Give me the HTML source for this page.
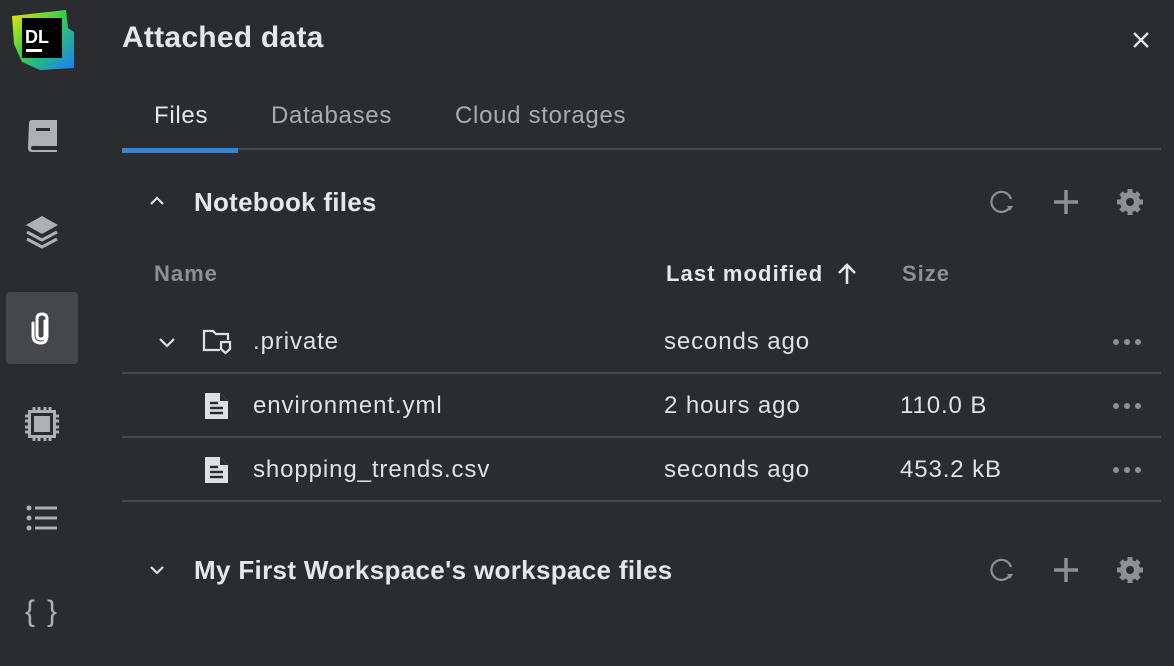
<!DOCTYPE html><html><head><style>
body{margin:0;width:1174px;height:666px;background:#2b2c2f;font-family:"Liberation Sans",sans-serif;color:#dfe1e5;position:relative;overflow:hidden}
.a{position:absolute}
.t{white-space:nowrap}
.r{font-size:24px;letter-spacing:0.9px}
.sep{position:absolute;left:122px;width:1039px;height:2px;background:#45474b}
</style></head><body>
<svg class="a" style="left:10px;top:10px" width="66" height="66" viewBox="0 0 66 66">
<defs><linearGradient id="g" x1="0" y1="0" x2="1" y2="1"><stop offset="0" stop-color="#f5e600"/><stop offset=".45" stop-color="#2fd34a"/><stop offset="1" stop-color="#1a7cff"/></linearGradient></defs>
<path d="M2 6 L56 0 L58 18 L64 22 L64 58 L30 60 L12 52 L4 34 Z" fill="url(#g)"/>
<rect x="12" y="8" width="40" height="40" fill="#000"/>
<text x="15" y="33" font-family="Liberation Sans" font-weight="bold" font-size="18" fill="#fff">DL</text>
<rect x="16" y="39" width="16" height="3" fill="#fff"/>
</svg>
<svg class="a" style="left:26px;top:119px" width="32" height="34" viewBox="0 0 32 34"><path d="M3 4 Q3 1 6 1 H31 V27 H7 Q5 27 5 29 Q5 31 7 31 H31 V33 H6 Q2 33 2 29 Z" fill="#aeb0b4"/><rect x="10" y="9" width="14" height="3" fill="#2b2c2f"/></svg>
<svg class="a" style="left:24px;top:214px" width="36" height="36" viewBox="0 0 36 36"><path d="M18 2 L34 11 L18 20 L2 11Z" fill="#aeb0b4"/><path d="M3 18 L18 26 L33 18" stroke="#aeb0b4" stroke-width="3" fill="none"/><path d="M3 25 L18 33 L33 25" stroke="#aeb0b4" stroke-width="3" fill="none"/></svg>
<div class="a" style="left:6px;top:292px;width:72px;height:72px;background:#46474b;border-radius:4px"></div>
<svg class="a" style="left:28px;top:311px" width="28" height="34" viewBox="0 0 28 34"><path d="M17 10 V24 Q17 28 13 28 Q9 28 9 24 V8 Q9 3 14 3 Q19 3 19 8 V24 Q19 32 13 32 Q5 32 5 24 V12" stroke="#fff" stroke-width="3" fill="none" stroke-linecap="round"/></svg>
<svg class="a" style="left:24px;top:406px" width="36" height="36" viewBox="0 0 36 36"><g stroke="#aeb0b4" stroke-width="3"><path d="M10 1v5M15 1v5M21 1v5M26 1v5M10 30v5M15 30v5M21 30v5M26 30v5M1 10h5M1 15h5M1 21h5M1 26h5M30 10h5M30 15h5M30 21h5M30 26h5"/><rect x="5.5" y="5.5" width="25" height="25" fill="none"/></g><rect x="10" y="10" width="16" height="16" fill="#aeb0b4"/></svg>
<svg class="a" style="left:25px;top:503px" width="34" height="34" viewBox="0 0 34 34"><g fill="#aeb0b4"><circle cx="4" cy="5" r="2.5"/><circle cx="4" cy="15" r="2.5"/><circle cx="4" cy="25" r="2.5"/><rect x="10" y="3.5" width="22" height="3"/><rect x="10" y="13.5" width="22" height="3"/><rect x="10" y="23.5" width="22" height="3"/></g></svg>
<div class="a t" style="left:25px;top:595px;font-size:30px;color:#aeb0b4;letter-spacing:12px">{}</div>

<div class="a t" style="left:122px;top:21px;font-size:30px;font-weight:bold;color:#e6e7ea;letter-spacing:0.25px">Attached data</div>
<svg class="a" style="left:1132px;top:31px" width="18" height="18"><path d="M2 2L16 16M16 2L2 16" stroke="#dfe1e5" stroke-width="2.4"/></svg>

<div class="a t" style="left:154px;top:102px;font-size:24px;color:#e6e7ea;letter-spacing:0.7px">Files</div>
<div class="a t" style="left:271px;top:102px;font-size:24px;color:#a9abaf;letter-spacing:0.7px">Databases</div>
<div class="a t" style="left:455px;top:102px;font-size:24px;color:#a9abaf;letter-spacing:0.7px">Cloud storages</div>
<div class="a" style="left:122px;top:148px;width:1039px;height:2px;background:#45474b"></div>
<div class="a" style="left:122px;top:148px;width:116px;height:5px;background:#3d83c6"></div>

<svg class="a" style="left:149px;top:195px" width="16" height="12"><path d="M2 9L8 3L14 9" stroke="#dfe1e5" stroke-width="2.2" fill="none"/></svg>
<div class="a t" style="left:194px;top:187px;font-size:26px;font-weight:bold;color:#e6e7ea;letter-spacing:0.25px">Notebook files</div>

<svg class="a" style="left:988px;top:189px" width="28" height="28" viewBox="0 0 28 28"><path d="M22 18 A10 10 0 1 1 23 10" stroke="#8e9094" stroke-width="2.2" fill="none"/><path d="M25 17 L19 17 L22 22Z" fill="#8e9094"/></svg>
<svg class="a" style="left:1053px;top:189px" width="26" height="26"><path d="M13 1V25M1 13H25" stroke="#8e9094" stroke-width="3.5"/></svg>
<svg class="a" style="left:1116px;top:188px" width="28" height="28" viewBox="0 0 28 28"><g fill="#8e9094"><circle cx="14" cy="14" r="10"/><g stroke="#8e9094" stroke-width="5"><path d="M14 1V27M1 14H27M5 5L23 23M23 5L5 23"/></g></g><circle cx="14" cy="14" r="4" fill="#2b2c2f"/></svg>

<div class="a t" style="left:154px;top:261px;font-size:22px;color:#8e9094;font-weight:bold;letter-spacing:1px">Name</div>
<div class="a t" style="left:666px;top:261px;font-size:22px;color:#e6e7ea;font-weight:bold;letter-spacing:1.1px">Last modified</div>
<svg class="a" style="left:837px;top:262px" width="20" height="24"><path d="M10 22V3M2 11L10 3L18 11" stroke="#e6e7ea" stroke-width="2.6" fill="none"/></svg>
<div class="a t" style="left:902px;top:261px;font-size:22px;color:#8e9094;font-weight:bold;letter-spacing:1px">Size</div>

<svg class="a" style="left:158px;top:336px" width="18" height="12"><path d="M2 3L9 10L16 3" stroke="#dfe1e5" stroke-width="2.2" fill="none"/></svg>
<svg class="a" style="left:202px;top:328px" width="30" height="28" viewBox="0 0 30 28"><path d="M18 22H2V3H11L14 6H26V12" stroke="#dfe1e5" stroke-width="2.2" fill="none"/><path d="M19 14H28V21L23.5 25L19 21Z" stroke="#dfe1e5" stroke-width="2.2" fill="none"/></svg>
<div class="a t r" style="left:253px;top:328px">.private</div>
<div class="a t r" style="left:664px;top:328px">seconds ago</div>
<div class="sep" style="top:372px"></div>

<svg class="a" style="left:204px;top:392px" width="26" height="28" viewBox="0 0 26 28"><path d="M1 1H16L24 9V27H1Z" fill="#dfe1e5"/><path d="M16 1V9H24" fill="#2b2c2f"/><path d="M6 11H14M6 16H19M6 21H19" stroke="#2b2c2f" stroke-width="2.4"/></svg>
<div class="a t r" style="left:253px;top:392px">environment.yml</div>
<div class="a t r" style="left:664px;top:392px">2 hours ago</div>
<div class="a t r" style="left:900px;top:392px">110.0 B</div>
<div class="sep" style="top:436px"></div>

<svg class="a" style="left:204px;top:456px" width="26" height="28" viewBox="0 0 26 28"><path d="M1 1H16L24 9V27H1Z" fill="#dfe1e5"/><path d="M16 1V9H24" fill="#2b2c2f"/><path d="M6 11H14M6 16H19M6 21H19" stroke="#2b2c2f" stroke-width="2.4"/></svg>
<div class="a t r" style="left:253px;top:456px">shopping_trends.csv</div>
<div class="a t r" style="left:664px;top:456px">seconds ago</div>
<div class="a t r" style="left:900px;top:456px">453.2 kB</div>
<div class="sep" style="top:500px"></div>

<svg class="a" style="left:1112px;top:336px" width="32" height="142"><g fill="#8e9094"><circle cx="4" cy="6" r="3"/><circle cx="15" cy="6" r="3"/><circle cx="26" cy="6" r="3"/><circle cx="4" cy="70" r="3"/><circle cx="15" cy="70" r="3"/><circle cx="26" cy="70" r="3"/><circle cx="4" cy="134" r="3"/><circle cx="15" cy="134" r="3"/><circle cx="26" cy="134" r="3"/></g></svg>

<svg class="a" style="left:149px;top:564px" width="16" height="12"><path d="M2 3L8 9L14 3" stroke="#dfe1e5" stroke-width="2.2" fill="none"/></svg>
<div class="a t" style="left:194px;top:555px;font-size:26px;font-weight:bold;color:#e6e7ea;letter-spacing:0.33px">My First Workspace's workspace files</div>
<svg class="a" style="left:988px;top:557px" width="28" height="28" viewBox="0 0 28 28"><path d="M22 18 A10 10 0 1 1 23 10" stroke="#8e9094" stroke-width="2.2" fill="none"/><path d="M25 17 L19 17 L22 22Z" fill="#8e9094"/></svg>
<svg class="a" style="left:1053px;top:557px" width="26" height="26"><path d="M13 1V25M1 13H25" stroke="#8e9094" stroke-width="3.5"/></svg>
<svg class="a" style="left:1116px;top:556px" width="28" height="28" viewBox="0 0 28 28"><g fill="#8e9094"><circle cx="14" cy="14" r="10"/><g stroke="#8e9094" stroke-width="5"><path d="M14 1V27M1 14H27M5 5L23 23M23 5L5 23"/></g></g><circle cx="14" cy="14" r="4" fill="#2b2c2f"/></svg>
</body></html>
